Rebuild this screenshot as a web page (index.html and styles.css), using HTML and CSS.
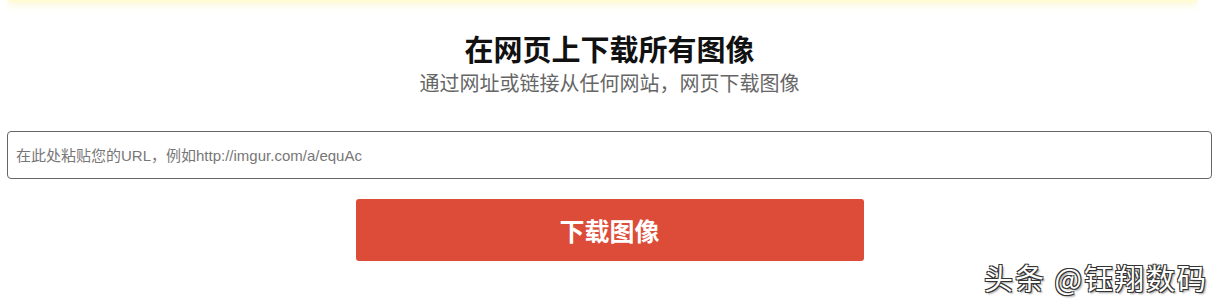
FILE: index.html
```html
<!DOCTYPE html>
<html lang="zh">
<head>
<meta charset="utf-8">
<link rel="stylesheet" href="styles.css">
</head>
<body>
<div class="notice"></div>
<main class="main">
  <h1 class="title">在网页上下载所有图像</h1>
  <p class="subtitle">通过网址或链接从任何网站，网页下载图像</p>
  <input class="url" type="text" placeholder="在此处粘贴您的URL，例如http://imgur.com/a/equAc">
  <button class="btn">下载图像</button>
</main>
<div class="watermark">头条 @钰翔数码</div>
</body>
</html>
```
FILE: styles.css
```css
html, body { margin: 0; padding: 0; background: #fff; }
body {
  width: 1219px; height: 307px; overflow: hidden; position: relative;
  font-family: "Liberation Sans", "Noto Sans CJK SC", sans-serif;
}
.notice {
  margin: 0 22px 0 8px;
  height: 3px;
  background: #fffbd6;
  box-shadow: 0 2px 6px rgba(240, 235, 150, 0.6);
  border-radius: 0 0 4px 4px;
}
.main {
  display: flex; flex-direction: column; align-items: center;
  padding: 0 7px;
}
.title {
  margin: 27px 0 0;
  font-size: 29px; line-height: 36px; font-weight: bold; color: #111;
  font-family: "Noto Sans CJK SC", sans-serif;
}
.subtitle {
  margin: 3px 0 0;
  font-size: 20px; line-height: 28px; color: #666;
  font-family: "Noto Sans CJK SC", sans-serif;
}
.url {
  box-sizing: border-box;
  margin-top: 34px;
  width: 100%; height: 48px;
  border: 1px solid #666; border-radius: 4px;
  padding: 0 8px;
  font-size: 15px;
  font-family: "Liberation Sans", "Noto Sans CJK SC", sans-serif;
  color: #333;
}
.url::placeholder { color: #777; }
.btn {
  margin-top: 20px;
  width: 508px; height: 62px;
  border: none; border-radius: 3px;
  background: #dd4b39; color: #fff;
  font-size: 25px; font-weight: bold;
  font-family: "Noto Sans CJK SC", sans-serif;
}
.watermark {
  position: absolute; left: 984px; top: 258px;
  font-size: 29px; line-height: 38px; color: #fff;
  letter-spacing: 2px;
  font-family: "Noto Sans CJK SC", sans-serif;
  text-shadow: -1px -1px 0 #333, 1px -1px 0 #333, -1px 1px 0 #333, 1px 1px 0 #333, 2px 2px 2px rgba(0,0,0,0.4);
}
```
